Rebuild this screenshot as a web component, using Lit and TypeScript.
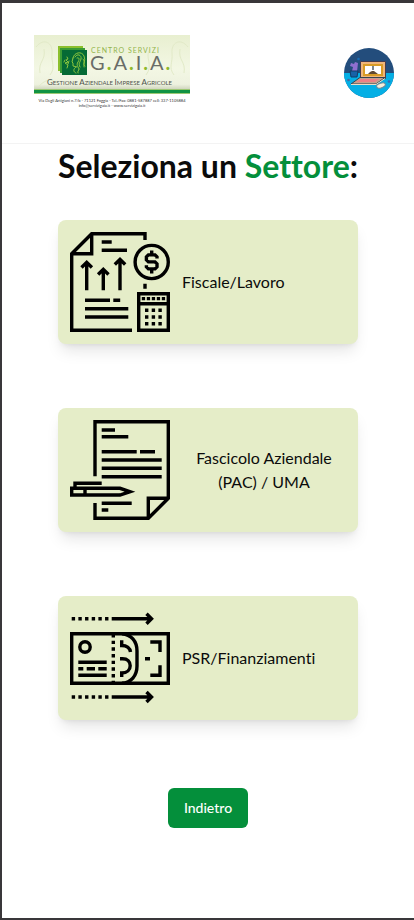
import { LitElement, html, css, svg, type SVGTemplateResult } from "lit";
import { customElement } from "lit/decorators.js";

const fiscalIcon = svg`
  <path d="M75 8V1.7H21.7L1.7 21.7V98.3H62M1.7 21.7H21.7V1.7"/>
  <path d="M31.7 10h10M31.7 18.3h25.3M75 51.7v5"/>
  <path d="M16.7 58.3V31.5M11.5 35.5l5.2-5.2 5.2 5.2M33.3 58.3V38.5M28.1 42.5l5.2-5.2 5.2 5.2M50 58.3V28.5M44.8 32.5l5.2-5.2 5.2 5.2"/>
  <path d="M15 68.3h25M43.3 68.3h6.9M15 76.7h43.3M15 85h43.3"/>
  <circle cx="81.7" cy="30" r="16.6"/>
  <path d="M87 26.5v-1.6l-2-2h-6.6l-2 2v3l2 2H85l2 2v3l-2 2h-6.6l-2-2v-1.6M81.7 18.5v4.4M81.7 37v4.5"/>
  <path d="M68.7 61.7h29.6v36.6H68.7zM68.7 71.7h29.6"/>
  <path stroke-dasharray="3.3 1.7" d="M71.8 66.6h24"/>
  <path stroke-dasharray="3.4 3.3" d="M75 78.3h17M75 85h17M75 91.7h17"/>`;

const dossierIcon = svg`
  <path d="M25 56.3V1.7H98.3V78.3L78.3 98.3H25V83M98.3 78.3H78.3V98.3"/>
  <path d="M31.7 10H45M31.7 16.7h26.6M31.7 31.7h35M70 31.7h15M31.7 40h60M31.7 48.3h60M31.7 56.7h60M31.7 83.3h30M31.7 90h6.6"/>
  <path d="M31.7 63.3H5V68M1.7 68.3H50L60 71.7 50 75H1.7zM15 68.3V75"/>`;

const fundingIcon = svg`
  <path stroke-dasharray="3.4 3.27" d="M1.7 10.7h37M1.7 89h37"/>
  <path d="M41.7 10.7H81M76.5 5.7l5 5-5 5M41.7 89H81M76.5 84l5 5-5 5"/>
  <path d="M1.7 25.7h96.6v49.6H1.7z"/>
  <circle cx="15" cy="39" r="5.2"/>
  <path d="M8.3 54.3h28.4M8.3 60.7h5M16.7 60.7H25M28.3 60.7h8.4M8.3 67.3h28.4"/>
  <path stroke-dasharray="3.4 3.27" d="M43.3 26V75"/>
  <path d="M52 25.7C61 26.5 67 33 67 43V58C67 68 61 74.5 52 75.3"/>
  <path d="M51.7 32.3V37.5C57 37.5 60 40.5 60.5 44M50 50.7h2.5c5 0 7.7 3 7.7 7s-3 7.3-8.5 7.3v4"/>
  <path d="M80.3 34H90v10M80.3 67.3H90v-10M75 50.7h5"/>`;

interface Sector {
  label: string;
  icon: SVGTemplateResult;
}

const sectors: Sector[] = [
  { label: "Fiscale/Lavoro", icon: fiscalIcon },
  { label: "Fascicolo Aziendale (PAC) / UMA", icon: dossierIcon },
  { label: "PSR/Finanziamenti", icon: fundingIcon },
];

@customElement("gaia-logo")
export class GaiaLogo extends LitElement {
  static styles = css`
    :host { display: block; }
    .logo { display: block; width: 156px; height: 76px; }
    .text { font-family: Lato, "Open Sans", sans-serif; }
    .over { font-size: 7px; letter-spacing: 1px; fill: #93b54d; }
    .name { font-size: 20px; letter-spacing: 2px; fill: #6a6d68; }
    .dot { fill: #8fb92c; font-weight: 700; }
    .tagline { font-size: 6px; fill: #4f534c; }
    .cap { font-size: 8px; }
    .contact { font-size: 4px; fill: #333; }
  `;

  render() {
    return html`
      <svg class="logo text" viewBox="0 0 156 76" role="img" aria-label="Centro Servizi G.A.I.A.">
        <defs>
          <linearGradient id="field" x1="0" y1="0" x2="0" y2="1">
            <stop offset="0" stop-color="#e8efd0"/>
            <stop offset=".6" stop-color="#f3f7e4"/>
            <stop offset=".88" stop-color="#eef2df"/>
            <stop offset="1" stop-color="#c4cab2"/>
          </linearGradient>
        </defs>
        <rect width="156" height="56" fill="url(#field)"/>
        <g fill="none" stroke="#e2eac8" stroke-width="1">
          <path d="M2 12c8-10 17-4 16 6s4 14-2 22M6 38c-2-12 6-12 4-24M22 48c-6-6-12-2-18 4"/>
          <path d="M154 12c-8-10-17-4-16 6s-4 14 2 22M150 38c2-12-6-12-4-24M116 14c-6 8 4 16-4 26"/>
        </g>
        <rect y="54" width="156" height="5" fill="#9cc873"/>
        <rect y="55" width="156" height="3" fill="#119343"/>
        <rect x="24" y="11" width="25" height="25" fill="#8cc02d"/>
        <rect x="26" y="13" width="25" height="25" fill="#3a9b35"/>
        <rect x="28" y="15" width="25" height="25" fill="#056a35"/>
        <g fill="none" stroke="#8cc63f" stroke-width="1" stroke-linecap="round">
          <path d="M39 23c1-6 9-7 11-2s-1 7 0 11M41 22c2-4 7-2 6 2s-3 4-1 8M43 23c2-1 3 1 1 4s0 4 1 7"/>
          <path d="M39 23l-1 4 1 1v3l4 1M42 32c-3 2-3 5 0 6M45 34c0 2-2 2-1 4M49 24c3 3-1 5 2 7"/>
          <path d="M33 22l1 2-2 1 2 2-3 1 3 2-1 3M31 25l-1 2M35 26l-1 3"/>
        </g>
        <text class="over" x="57" y="18">CENTRO SERVIZI</text>
        <text class="name" x="56" y="35">G<tspan class="dot">.</tspan>A<tspan class="dot">.</tspan>I<tspan class="dot">.</tspan>A<tspan class="dot">.</tspan></text>
        <text class="tagline" x="13" y="50"><tspan class="cap">G</tspan>ESTIONE <tspan class="cap">A</tspan>ZIENDALE <tspan class="cap">I</tspan>MPRESE <tspan class="cap">A</tspan>GRICOLE</text>
        <text class="contact" x="78" y="67" text-anchor="middle">Via Degli Artigiani n.7/b - 71121 Foggia - Tel./Fax: 0881-587887 cell: 337-1105884</text>
        <text class="contact" x="78" y="72" text-anchor="middle">info@servizigaia.it - www.servizigaia.it</text>
      </svg>
    `;
  }
}

@customElement("user-avatar")
export class UserAvatar extends LitElement {
  static styles = css`
    :host { display: block; }
    .button {
      display: block;
      padding: 0;
      border: 0;
      border-radius: 50%;
      overflow: hidden;
      background: none;
      cursor: pointer;
    }
    .picture { display: block; width: 50px; height: 50px; }
  `;

  render() {
    return html`
      <button class="button" aria-label="Profilo">
        <svg class="picture" viewBox="0 0 50 50" aria-hidden="true">
          <rect width="50" height="50" fill="#234d7c"/>
          <rect y="25" width="50" height="25" fill="#04afe5"/>
          <path d="M8 23l1-4-3-1 1-3 3 1 1-2 3 1-1 9z" fill="#8f6fd0"/>
          <path d="M6 23h8l-1 6H7z" fill="#1762a7" stroke="#123c66"/>
          <path d="M16.500 13.500h25v17h-25z" fill="#efb579" stroke="#483b4b"/>
          <rect x="20" y="17" width="18" height="10" fill="#fff" stroke="#d89b25" stroke-width="2"/>
          <path d="M24 26l2-2 2-1h2l4 3z" fill="#604932"/>
          <path d="M29 18v4" stroke="#345" stroke-width="1.300"/>
          <path d="M16 29.500h25L32 36H7z" fill="#c6a18d" stroke="#344352"/>
          <path d="M17 31h18l-4 3H12z" fill="#ed8086"/>
          <path d="M7 36.500h25l9-6" fill="none" stroke="#edddc4"/>
          <ellipse cx="37" cy="37.500" rx="4.500" ry="2.300" fill="#f4efdc" stroke="#6f8695" transform="rotate(-18 37 37.500)"/>
          <circle cx="14.500" cy="11" r="1.300" fill="#176bb3"/>
          <circle cx="4.500" cy="32" r="1.300" fill="#46679e"/>
          <circle cx="45" cy="33.500" r="1.300" fill="#3b66b2"/>
        </svg>
      </button>
    `;
  }
}

@customElement("app-root")
export class AppRoot extends LitElement {
  static styles = css`
    :host {
      display: block;
      box-sizing: border-box;
      min-height: 100vh;
      border: solid #39373a;
      border-width: 3px 0 2px 2px;
      background: #fff;
      color: #0b0b0b;
      font-family: Lato, "Open Sans", sans-serif;
      font-size: 16px;
      line-height: 24px;
      font-variant-ligatures: none;
    }
    .header {
      display: flex;
      align-items: center;
      justify-content: space-between;
      padding: 32px 20px 32px 32px;
      border-bottom: 1px solid #f3f3f3;
    }
    .main {
      display: flex;
      flex-direction: column;
      align-items: center;
      padding: 4px 16px 32px;
    }
    .title {
      margin: 0 0 36px;
      font-size: 32px;
      line-height: 36px;
      font-weight: 700;
      text-align: center;
    }
    .accent { color: #048f3b; }
    .list {
      display: flex;
      flex-direction: column;
      gap: 64px;
      width: 100%;
      max-width: 300px;
      margin: 0 0 68px;
      padding: 0;
      list-style: none;
    }
    .card {
      display: flex;
      align-items: center;
      gap: 12px;
      width: 100%;
      padding: 12px;
      border: 0;
      border-radius: 8px;
      background: #e5edc8;
      box-shadow: 0 10px 15px -3px rgb(0 0 0 / 0.1), 0 4px 6px -4px rgb(0 0 0 / 0.1);
      color: inherit;
      font: inherit;
      font-variant-ligatures: none;
      text-align: center;
      cursor: pointer;
    }
    .icon {
      flex: none;
      width: 100px;
      height: 100px;
      fill: none;
      stroke: #000;
      stroke-width: 3.4;
    }
    .back {
      padding: 8px 16px;
      border: 0;
      border-radius: 6px;
      background: #048f3b;
      color: #fff;
      font: inherit;
      font-size: 14px;
      font-weight: 500;
      cursor: pointer;
    }
  `;

  render() {
    return html`
      <header class="header">
        <gaia-logo></gaia-logo>
        <user-avatar></user-avatar>
      </header>
      <main class="main">
        <h1 class="title">Seleziona un <span class="accent">Settore</span>:</h1>
        <ul class="list">
          ${sectors.map(
            (sector) => html`
              <li>
                <button class="card">
                  <svg class="icon" viewBox="0 0 100 100" aria-hidden="true">${sector.icon}</svg>
                  <span>${sector.label}</span>
                </button>
              </li>
            `,
          )}
        </ul>
        <button class="back">Indietro</button>
      </main>
    `;
  }
}
